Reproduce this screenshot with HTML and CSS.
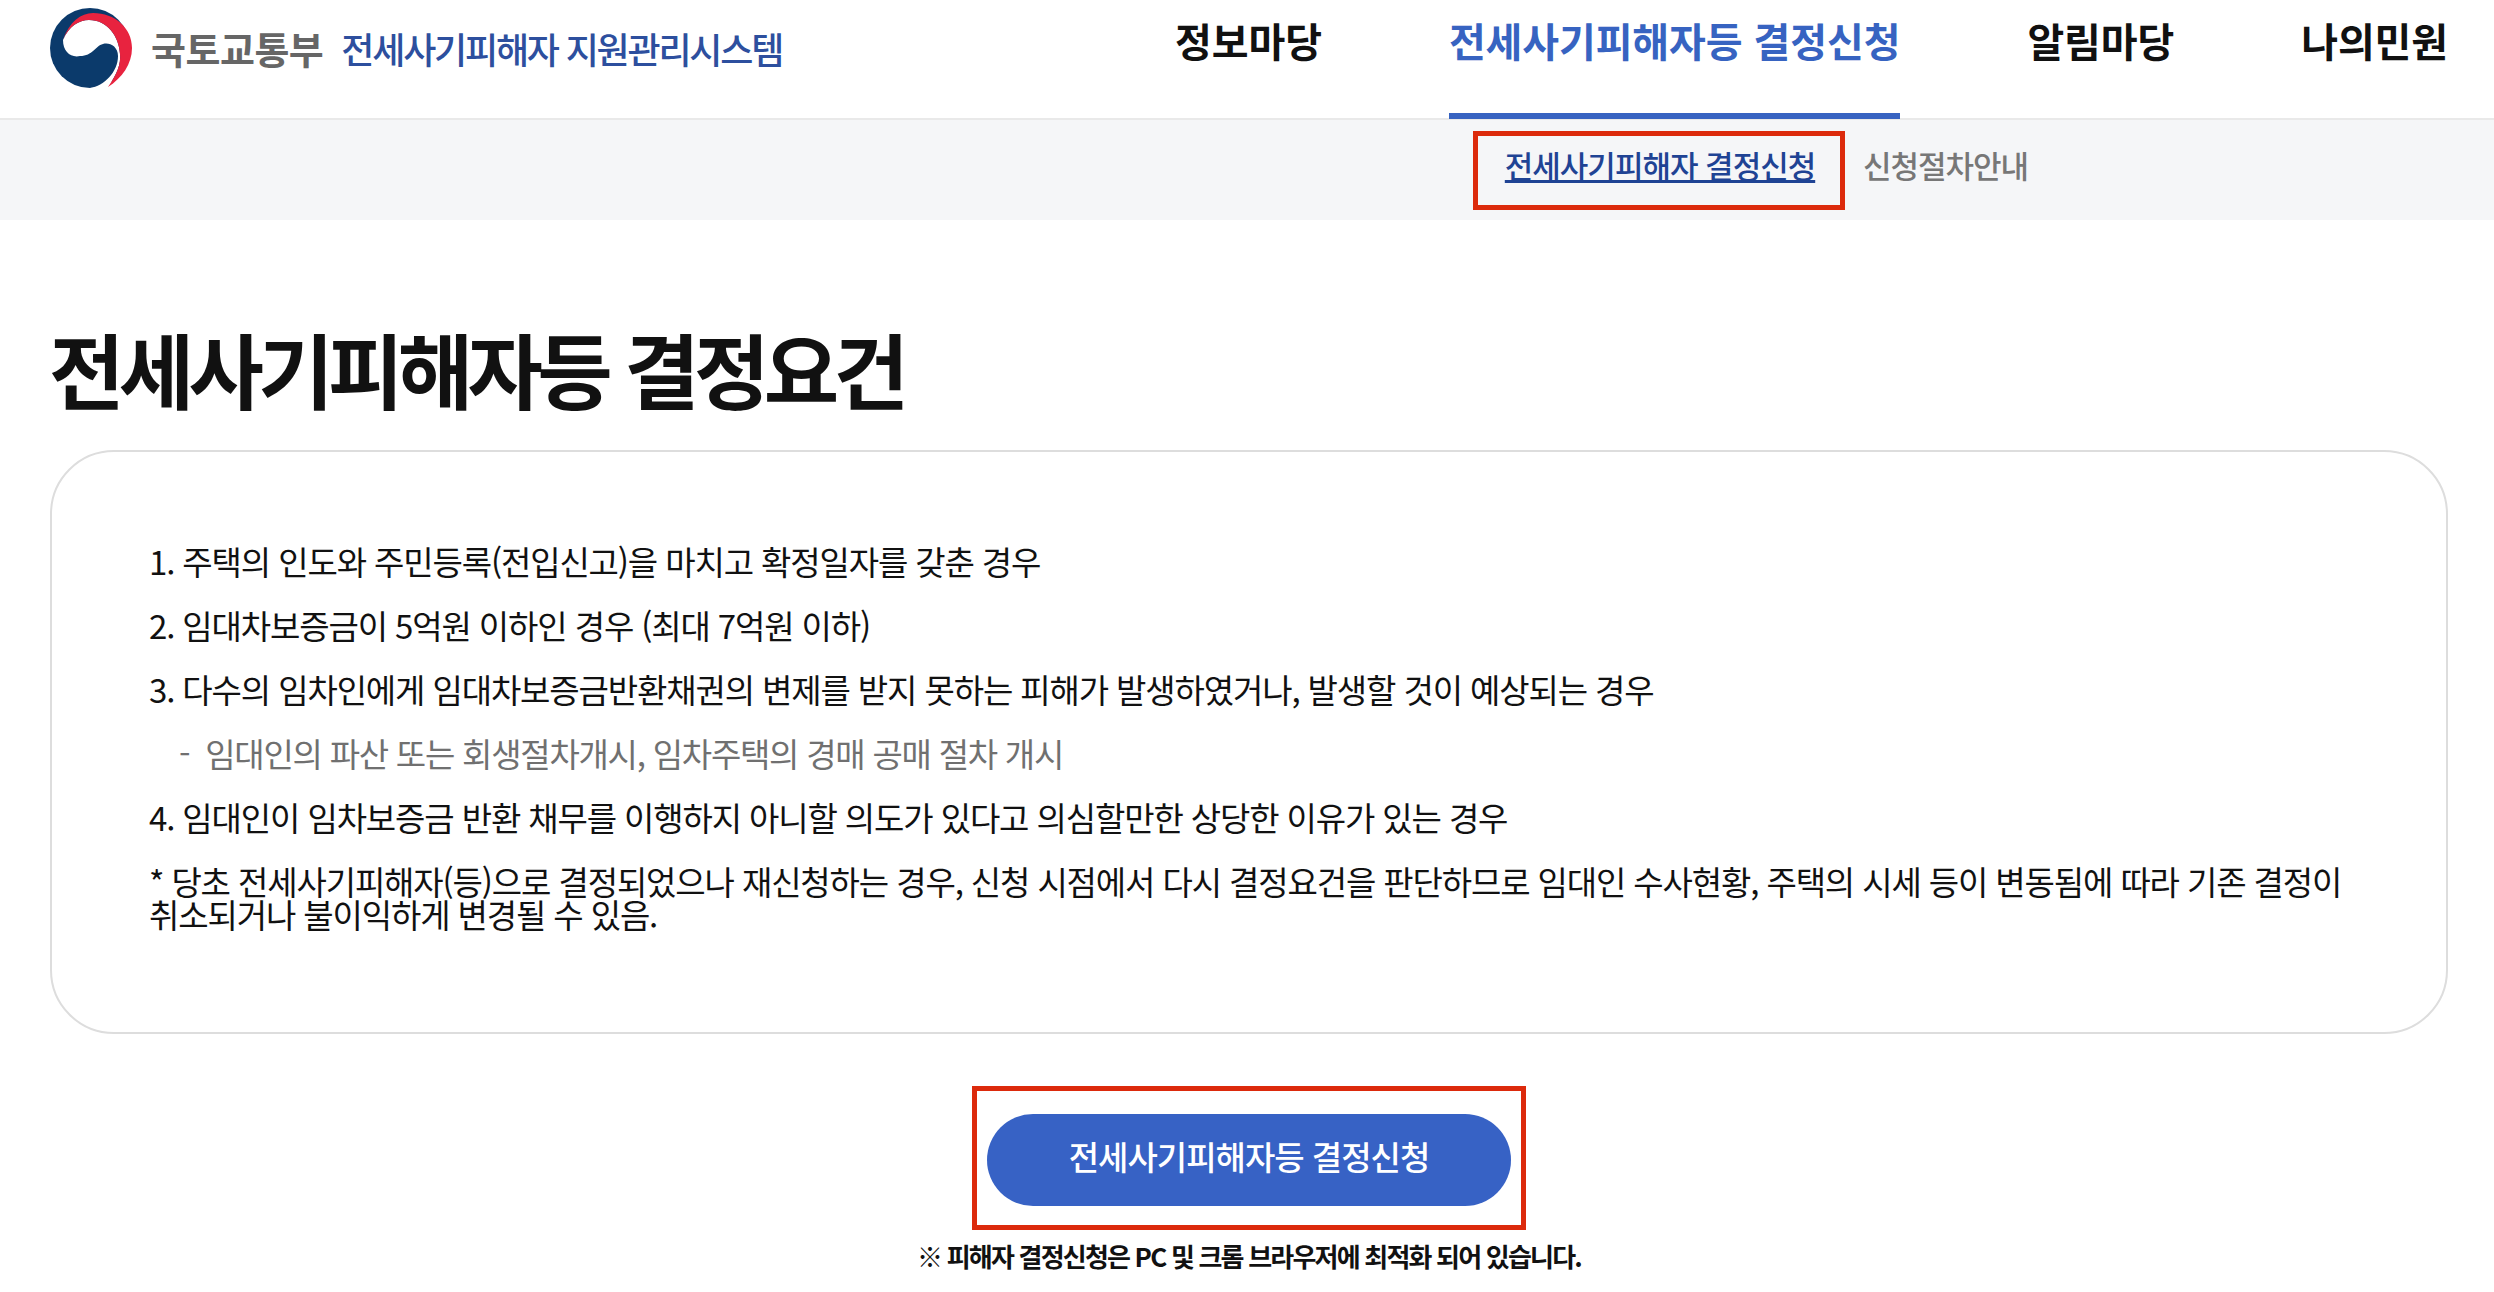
FILE: index.html
```html
<!DOCTYPE html>
<html lang="ko">
<head>
    <meta charset="UTF-8">
    <meta name="viewport" content="width=device-width, initial-scale=1.0">
    <title>전세사기피해자 지원관리시스템</title>
    <link rel="stylesheet" href="styles.css">
</head>
<body>
    <header class="header">
        <a class="logo" href="#">
            <svg class="logo-mark" viewBox="0 0 84 80" width="84" height="80">
                <circle cx="41" cy="40" r="40" fill="#0b3a6b"/>
                <path d="M14 32C20 18 30 12 40 12c18 0 30 16 31 34 1 10-3 20-12 33-5 1-11 1-18 1 14-2 28-16 28-32 0-10-9-14-15-12-8 2-10 12-23 12-9 2-17-4-17-16z" fill="#fff"/>
                <path d="M14 32C20 14 32 5 44 5c22 0 39 15 39 35 0 16-10 30-24 39 9-13 13-23 12-33-1-18-13-34-31-34-10 0-20 6-26 20z" fill="#e8233f"/>
            </svg>
            <span class="logo-org">국토교통부</span>
            <span class="logo-name">전세사기피해자 지원관리시스템</span>
        </a>
        <nav class="gnb">
            <a href="#">정보마당</a>
            <a class="active" href="#">전세사기피해자등 결정신청</a>
            <a href="#">알림마당</a>
            <a href="#">나의민원</a>
        </nav>
    </header>

    <div class="subnav">
        <a class="subnav-current" href="#">전세사기피해자 결정신청</a>
        <a class="subnav-item" href="#">신청절차안내</a>
    </div>

    <main class="content">
        <h1>전세사기피해자등 결정요건</h1>
        <section class="card">
            <p>1. 주택의 인도와 주민등록(전입신고)을 마치고 확정일자를 갖춘 경우</p>
            <p>2. 임대차보증금이 5억원 이하인 경우 (최대 7억원 이하)</p>
            <p>3. 다수의 임차인에게 임대차보증금반환채권의 변제를 받지 못하는 피해가 발생하였거나, 발생할 것이 예상되는 경우</p>
            <p class="sub">- &nbsp;임대인의 파산 또는 회생절차개시, 임차주택의 경매 공매 절차 개시</p>
            <p>4. 임대인이 임차보증금 반환 채무를 이행하지 아니할 의도가 있다고 의심할만한 상당한 이유가 있는 경우</p>
            <p class="notice">* 당초 전세사기피해자(등)으로 결정되었으나 재신청하는 경우, 신청 시점에서 다시 결정요건을 판단하므로 임대인 수사현황, 주택의 시세 등이 변동됨에 따라 기존 결정이 취소되거나 불이익하게 변경될 수 있음.</p>
        </section>
        <div class="actions">
            <div class="highlight">
                <button class="apply">전세사기피해자등 결정신청</button>
            </div>
            <p class="browser-note">※ 피해자 결정신청은 PC 및 크롬 브라우저에 최적화 되어 있습니다.</p>
        </div>
    </main>
</body>
</html>
```

FILE: styles.css
```css
* {
    box-sizing: border-box;
}
body {
    margin: 0;
    background-color: #fff;
    color: #111;
    font-family: "Noto Sans CJK KR", "Noto Sans", sans-serif;
}
a {
    color: inherit;
    text-decoration: none;
}
.header {
    display: flex;
    justify-content: space-between;
    height: 120px;
    padding: 0 46px 0 49px;
    border-bottom: 2px solid #e9e9e9;
}
.logo {
    display: flex;
    align-items: center;
    height: 95px;
}
.logo-mark {
    margin-right: 18px;
}
.logo-org {
    font-size: 38px;
    font-weight: 700;
    letter-spacing: -0.5px;
    color: #666;
    margin-right: 18px;
}
.logo-name {
    font-size: 36px;
    font-weight: 500;
    letter-spacing: -2.2px;
    color: #2d4f9e;
}
.gnb {
    display: flex;
    gap: 127px;
}
.gnb a {
    height: 119px;
    padding-top: 11px;
    font-size: 40px;
    font-weight: 700;
    letter-spacing: -0.1px;
}
.gnb a.active {
    color: #3763c1;
    border-bottom: 6px solid #3763c1;
}
.subnav {
    display: flex;
    align-items: center;
    height: 100px;
    padding-left: 1473px;
    background-color: #f5f6f8;
    font-size: 31px;
    font-weight: 500;
    letter-spacing: -1px;
    color: #777;
}
.subnav-current {
    display: block;
    width: 372px;
    height: 79px;
    margin-right: 18px;
    padding-left: 2px;
    border: 5px solid #dc2a0c;
    text-align: center;
    line-height: 58px;
    color: #1f4394;
    text-decoration: underline;
    text-decoration-thickness: 3px;
}
.subnav-item {
    margin-bottom: 12px;
}
.content {
    padding: 94px 46px 0 50px;
}
h1 {
    margin: 0 0 28px -1px;
    font-size: 82px;
    font-weight: 700;
    line-height: 108px;
    letter-spacing: -5.7px;
}
.card {
    height: 584px;
    padding: 85px 100px 0 97px;
    border: 2px solid #ddd;
    border-radius: 64px;
    font-size: 33px;
    letter-spacing: -1.13px;
}
.card p {
    margin: 0 0 16px;
    line-height: 48px;
}
.card .sub {
    padding-left: 30px;
    color: #707070;
    letter-spacing: -1.25px;
}
.card .notice {
    line-height: 33px;
    padding-top: 8px;
}
.actions {
    display: flex;
    flex-direction: column;
    align-items: center;
    margin-top: 52px;
}
.highlight {
    padding: 23px 8px 19px;
    width: 554px;
    height: 144px;
    border: 5px solid #dc2a0c;
    display: flex;
    justify-content: center;
}
.apply {
    width: 524px;
    height: 92px;
    padding: 0 0 8px;
    border: none;
    border-radius: 46px;
    background-color: #3762c5;
    color: #fff;
    font-family: inherit;
    font-size: 33px;
    font-weight: 500;
    letter-spacing: -1px;
}
.browser-note {
    margin: 7px 0 0;
    font-size: 26px;
    font-weight: 700;
    line-height: 38px;
    letter-spacing: -1.8px;
}
```
